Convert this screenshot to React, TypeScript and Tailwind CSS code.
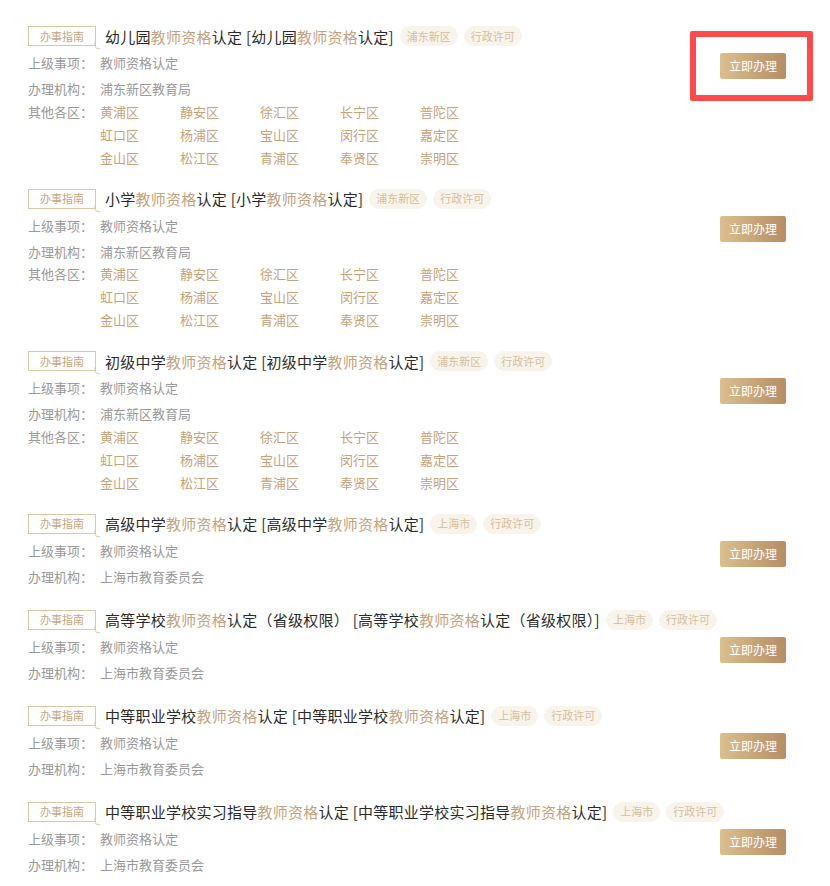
const FONT = { fontFamily: '"Microsoft YaHei", "Noto Sans CJK SC", "Noto Sans", sans-serif' }

const DISTRICTS = [
  '黄浦区', '静安区', '徐汇区', '长宁区', '普陀区',
  '虹口区', '杨浦区', '宝山区', '闵行区', '嘉定区',
  '金山区', '松江区', '青浦区', '奉贤区', '崇明区',
]

interface Item {
  prefix: string
  suffix?: string
  area: string
  org: string
  districts?: boolean
}

const ITEMS: Item[] = [
  { prefix: '幼儿园', area: '浦东新区', org: '浦东新区教育局', districts: true },
  { prefix: '小学', area: '浦东新区', org: '浦东新区教育局', districts: true },
  { prefix: '初级中学', area: '浦东新区', org: '浦东新区教育局', districts: true },
  { prefix: '高级中学', area: '上海市', org: '上海市教育委员会' },
  { prefix: '高等学校', suffix: '（省级权限）', area: '上海市', org: '上海市教育委员会' },
  { prefix: '中等职业学校', area: '上海市', org: '上海市教育委员会' },
  { prefix: '中等职业学校实习指导', area: '上海市', org: '上海市教育委员会' },
]

// ── small pieces ──────────────────────────────────────────────────────────
function GuideTag() {
  return (
    <span className="relative flex h-[20px] w-[68px] shrink-0 items-center justify-center border border-[#dcc6a3] text-[11px] text-[#c9a57c]">
      办事指南
      {/* little speech-bubble tail */}
      <svg
        className="absolute -right-[6px] bottom-[-5px]"
        width="7"
        height="8"
        viewBox="0 0 7 8"
        fill="none"
        stroke="#dcc6a3"
        strokeWidth="1"
        aria-hidden="true"
      >
        <path d="M1 0 L1 4 Q1.5 7 6 7" />
      </svg>
    </span>
  )
}

function Pill({ children }: { children: string }) {
  return (
    <span className="flex h-[20px] shrink-0 items-center whitespace-nowrap rounded-full bg-[#f8f3eb] px-[7px] text-[11px] text-[#d5bf9d]">
      {children}
    </span>
  )
}

function Title({ prefix, suffix = '' }: { prefix: string; suffix?: string }) {
  return (
    <span className="whitespace-nowrap text-[15px] leading-6 tracking-[0.25px] text-[#2b2b2b]">
      {prefix}
      <span className="text-[#c4a27e]">教师资格</span>
      认定{suffix} [{prefix}
      <span className="text-[#c4a27e]">教师资格</span>
      认定{suffix}]
    </span>
  )
}

function InfoRow({ label, value, className = '' }: { label: string; value: string; className?: string }) {
  return (
    <div className={`flex text-[13px] leading-[26px] ${className}`}>
      <span className="w-[72px] shrink-0 text-[#9a9a9a]">{label}</span>
      <span className="text-[#999]">{value}</span>
    </div>
  )
}

function ServiceItem({ item }: { item: Item }) {
  return (
    <div className="flex pb-[18px]">
      <div className="min-w-0 flex-1">
        <div className="flex h-6 items-center whitespace-nowrap">
          <GuideTag />
          <span className="ml-[9px] shrink-0">
            <Title prefix={item.prefix} suffix={item.suffix} />
          </span>
          <div className="ml-[6px] flex shrink-0 gap-[6px]">
            <Pill>{item.area}</Pill>
            <Pill>行政许可</Pill>
          </div>
        </div>
        <InfoRow className="mt-[2px]" label="上级事项：" value="教师资格认定" />
        <InfoRow label="办理机构：" value={item.org} />
        {item.districts && (
          <div className="-mt-[2.5px] flex text-[13px] leading-[23px]">
            <span className="w-[72px] shrink-0 text-[#9a9a9a]">其他各区：</span>
            <div className="grid grid-cols-[repeat(5,80px)]">
              {DISTRICTS.map((d) => (
                <span key={d} className="text-[#c8a278]">{d}</span>
              ))}
            </div>
          </div>
        )}
      </div>
      <div className="shrink-0 pt-[29px]">
        <button
          type="button"
          className="flex h-[26px] w-[66px] items-center justify-center rounded-[2px] bg-gradient-to-r from-[#dcbf8d] to-[#b58e66] text-[12px] text-white"
        >
          立即办理
        </button>
      </div>
    </div>
  )
}

export default function App() {
  return (
    <div className="relative h-[886px] w-[830px] overflow-hidden bg-white" style={FONT}>
      <div className="pl-[28px] pr-[44px] pt-[24px]">
        {ITEMS.map((item) => (
          <ServiceItem key={item.prefix + (item.suffix ?? '')} item={item} />
        ))}
      </div>
      {/* red highlight annotation over the first button */}
      <div className="pointer-events-none absolute left-[690px] top-[31px] h-[70px] w-[123px] rounded-[2px] border-[6px] border-[#fd4b4b]" />
    </div>
  )
}
